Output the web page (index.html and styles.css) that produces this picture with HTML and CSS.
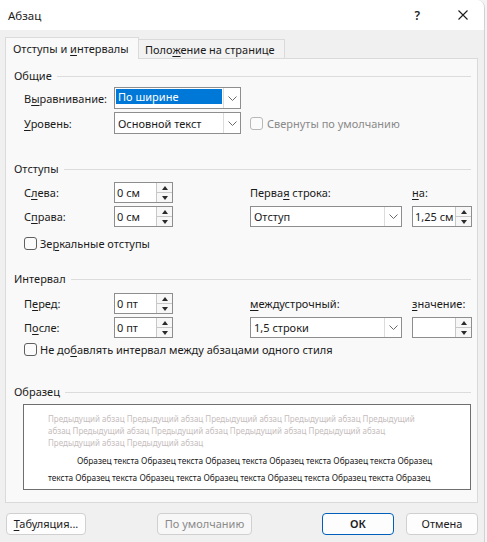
FILE: index.html
```html
<!DOCTYPE html>
<html lang="ru">
<head>
<meta charset="utf-8">
<title>Абзац</title>
<link rel="stylesheet" href="styles.css">
</head>
<body>
<div class="window">
  <div class="titlebar">
    <span class="title">Абзац</span>
    <span class="help">?</span>
    <svg class="close" width="10" height="10" viewBox="0 0 10 10"><path d="M0.5 0.5L9.5 9.5M9.5 0.5L0.5 9.5" stroke="#1b1b1b" stroke-width="1.1" fill="none"/></svg>
  </div>
  <div class="tabs">
    <div class="tab active">Отступы и <u>и</u>нтервалы</div>
    <div class="tab">Поло<u>ж</u>ение на странице</div>
  </div>
  <div class="panel">
    <section class="group g1">
      <div class="head"><span>Общие</span><i class="rule"></i></div>
      <div class="grid grid-general">
        <span class="lbl">В<u>ы</u>равнивание:</span>
        <div class="combo"><span class="val"><span class="sel">По ширине</span></span><span class="drop"><svg width="9" height="5" viewBox="0 0 9 5"><path d="M0.5 0.5L4.5 4.5L8.5 0.5" stroke="#6a6a6a" fill="none"/></svg></span></div>
        <span></span>
        <span></span>
        <span class="lbl"><u>У</u>ровень:</span>
        <div class="combo"><span class="val">Основной текст</span><span class="drop"><svg width="9" height="5" viewBox="0 0 9 5"><path d="M0.5 0.5L4.5 4.5L8.5 0.5" stroke="#6a6a6a" fill="none"/></svg></span></div>
        <span></span>
        <label class="check disabled"><span class="box"></span>Свернуты по умолчанию</label>
      </div>
    </section>

    <section class="group g2">
      <div class="head"><span>Отступы</span><i class="rule"></i></div>
      <div class="grid grid-spin">
        <span class="lbl">С<u>л</u>ева:</span>
        <div class="spin"><span class="val">0 см</span><span class="arrows"><i class="up"></i><i class="dn"></i></span></div>
        <span></span>
        <span class="lbl">Перва<u>я</u> строка:</span>
        <span></span>
        <span class="lbl"><u>н</u>а:</span>
        <span class="lbl">С<u>п</u>рава:</span>
        <div class="spin"><span class="val">0 см</span><span class="arrows"><i class="up"></i><i class="dn"></i></span></div>
        <span></span>
        <div class="combo"><span class="val">Отступ</span><span class="drop"><svg width="9" height="5" viewBox="0 0 9 5"><path d="M0.5 0.5L4.5 4.5L8.5 0.5" stroke="#6a6a6a" fill="none"/></svg></span></div>
        <span></span>
        <div class="spin"><span class="val">1,25 см</span><span class="arrows"><i class="up"></i><i class="dn"></i></span></div>
      </div>
      <label class="check row-check c1"><span class="box"></span>Зе<u>р</u>кальные отступы</label>
    </section>

    <section class="group g3">
      <div class="head"><span>Интервал</span><i class="rule"></i></div>
      <div class="grid grid-spin">
        <span class="lbl">П<u>е</u>ред:</span>
        <div class="spin"><span class="val">0 пт</span><span class="arrows"><i class="up"></i><i class="dn"></i></span></div>
        <span></span>
        <span class="lbl"><u>м</u>еждустрочный:</span>
        <span></span>
        <span class="lbl"><u>з</u>начение:</span>
        <span class="lbl">П<u>о</u>сле:</span>
        <div class="spin"><span class="val">0 пт</span><span class="arrows"><i class="up"></i><i class="dn"></i></span></div>
        <span></span>
        <div class="combo"><span class="val">1,5 строки</span><span class="drop"><svg width="9" height="5" viewBox="0 0 9 5"><path d="M0.5 0.5L4.5 4.5L8.5 0.5" stroke="#6a6a6a" fill="none"/></svg></span></div>
        <span></span>
        <div class="spin"><span class="val"></span><span class="arrows"><i class="up"></i><i class="dn"></i></span></div>
      </div>
      <label class="check row-check c2"><span class="box"></span>Не до<u>б</u>авлять интервал между абзацами одного стиля</label>
    </section>

    <section class="group g4">
      <div class="head"><span>Образец</span><i class="rule"></i></div>
      <div class="sample">
        <p class="prev">Предыдущий абзац Предыдущий абзац Предыдущий абзац Предыдущий абзац Предыдущий<br>абзац Предыдущий абзац Предыдущий абзац Предыдущий абзац Предыдущий абзац<br>Предыдущий абзац Предыдущий абзац</p>
        <p class="cur">Образец текста Образец текста Образец текста Образец текста Образец текста Образец<br>текста Образец текста Образец текста Образец текста Образец текста Образец текста Образец</p>
      </div>
    </section>
  </div>
  <div class="footer">
    <button class="btn b-tab"><u>Т</u>абуляция...</button>
    <button class="btn b-def" disabled>По умолчанию</button>
    <button class="btn b-ok">ОК</button>
    <button class="btn b-cancel">Отмена</button>
  </div>
</div>
</body>
</html>
```

FILE: styles.css
```css
* { box-sizing: border-box; }
html, body { margin: 0; padding: 0; }
body {
  width: 487px;
  height: 542px;
  overflow: hidden;
  background: #f4f4f4;
  font-family: "Noto Sans", "Open Sans", sans-serif;
  font-size: 11px;
  color: #1b1b1b;
}
u { text-decoration: underline; text-underline-offset: 2px; text-decoration-thickness: 1px; }

.window {
  width: 485px;
  height: 542px;
  background: #f0f0f0;
  border-top-right-radius: 8px;
  border-right: 1px solid #d2d2d2;
  overflow: hidden;
  display: flex;
  flex-direction: column;
}

.titlebar {
  height: 30px;
  flex: none;
  background: #ffffff;
  display: flex;
  align-items: center;
  padding-left: 8px;
}
.title { flex: 1; font-size: 11.5px; }
.help { margin-right: 38px; font-size: 12px; font-weight: 600; }
.close { margin-right: 16px; }

.tabs {
  flex: none;
  margin-top: 7px;
  height: 22px;
  margin-bottom: -1px;
  padding-left: 5px;
  display: flex;
  align-items: flex-end;
  position: relative;
  z-index: 1;
}
.tab {
  height: 19px;
  width: 146px;
  margin-bottom: 1px;
  padding-left: 6px;
  line-height: 19px;
  border: 1px solid #dadada;
  border-left: none;
  border-bottom: none;
  background: #f2f2f2;
  white-space: nowrap;
}
.tab.active {
  height: 22px;
  width: 134px;
  margin-bottom: 0;
  padding-left: 7px;
  line-height: 22px;
  border-left: 1px solid #dadada;
  background: #f9f9f9;
}

.panel {
  flex: none;
  margin-left: 5px;
  width: 473px;
  height: 445px;
  background: #f9f9f9;
  border: 1px solid #dadada;
}

.head {
  height: 14px;
  display: flex;
  align-items: center;
  padding-left: 8px;
  padding-right: 6px;
  line-height: 14px;
}
.rule { flex: 1; height: 1px; background: #dcdcdc; margin-left: 5px; }

.g1 { margin-top: 10px; }
.g2 { margin-top: 28px; }
.g3 { margin-top: 22px; }
.g4 { margin-top: 29px; }

.grid { display: grid; padding-left: 18px; align-items: center; }
.grid-general {
  margin-top: 4px;
  grid-template-columns: 90px 127px 9px 1fr;
  grid-template-rows: 22px 22px;
  row-gap: 3px;
}
.grid-spin {
  grid-template-columns: 90px 59px 77px 152px 10px 60px;
  grid-template-rows: 21px 21px;
  row-gap: 3px;
}
.g2 .grid-spin { margin-top: 6px; }
.g3 .grid-spin { margin-top: 7px; }

.lbl { white-space: nowrap; }

.combo, .spin {
  height: 100%;
  display: flex;
  background: #ffffff;
  border: 1px solid #8e8e8e;
}
.combo .val, .spin .val {
  flex: 1;
  display: flex;
  align-items: center;
  padding-left: 3px;
  white-space: nowrap;
  overflow: hidden;
}
.combo .val .sel {
  display: flex;
  align-items: center;
  align-self: stretch;
  margin: 1px 1px 4px -2px;
  padding-left: 2px;
  flex: 1;
  background: #0078d7;
  color: #ffffff;
}
.drop {
  width: 17px;
  border-left: 1px solid #dcdcdc;
  display: flex;
  align-items: center;
  justify-content: center;
}
.spin .val { padding-left: 2px; }
.arrows {
  width: 16px;
  border-left: 1px solid #c8c8c8;
  display: flex;
  flex-direction: column;
  background: #f7f7f7;
}
.arrows i {
  flex: 1;
  display: flex;
  align-items: center;
  justify-content: center;
}
.arrows i + i { border-top: 1px solid #c8c8c8; }
.arrows i::before {
  content: "";
  width: 0;
  height: 0;
  border-left: 3px solid transparent;
  border-right: 3px solid transparent;
}
.arrows .up::before { border-bottom: 4px solid #2a2a2a; }
.arrows .dn::before { border-top: 4px solid #2a2a2a; }

.check {
  display: flex;
  align-items: center;
  white-space: nowrap;
}
.box {
  width: 13px;
  height: 13px;
  border: 1px solid #5f5f5f;
  border-radius: 3px;
  background: #fbfbfb;
  margin-right: 3px;
}
.check.disabled { color: #8a8a8a; }
.check.disabled .box { border-color: #b8b8b8; margin-right: 4px; }
.row-check { margin-left: 18px; height: 14px; }
.c1 { margin-top: 9px; }
.c2 { margin-top: 4px; }

.sample {
  margin-top: 5px;
  margin-left: 17px;
  width: 448px;
  height: 86px;
  background: #ffffff;
  border: 1px solid #6f6f6f;
  padding: 8px 0 0 24px;
  white-space: nowrap;
}
.sample p { margin: 0; }
.prev {
  font-size: 8px;
  line-height: 12px;
  color: #c6bdbd;
}
.cur {
  margin-top: 3px !important;
  font-size: 8.3px;
  line-height: 17px;
  color: #1a1a1a;
  text-indent: 29px;
}

.footer {
  flex: none;
  margin-top: 10px;
  display: flex;
  align-items: center;
}
.btn {
  height: 22px;
  border: 1px solid #d0d0d0;
  border-radius: 4px;
  background: #fdfdfd;
  font-family: inherit;
  font-size: 11px;
  color: #1b1b1b;
  padding: 0;
  line-height: 18px;
}
.b-tab { margin-left: 6px; width: 80px; }
.b-def { margin-left: 71px; width: 95px; color: #8a8a8a; background: #f7f7f7; }
.b-ok { margin-left: 70px; width: 72px; border-color: #005fb8; font-weight: 600; }
.b-cancel { margin-left: 12px; width: 72px; }
```
